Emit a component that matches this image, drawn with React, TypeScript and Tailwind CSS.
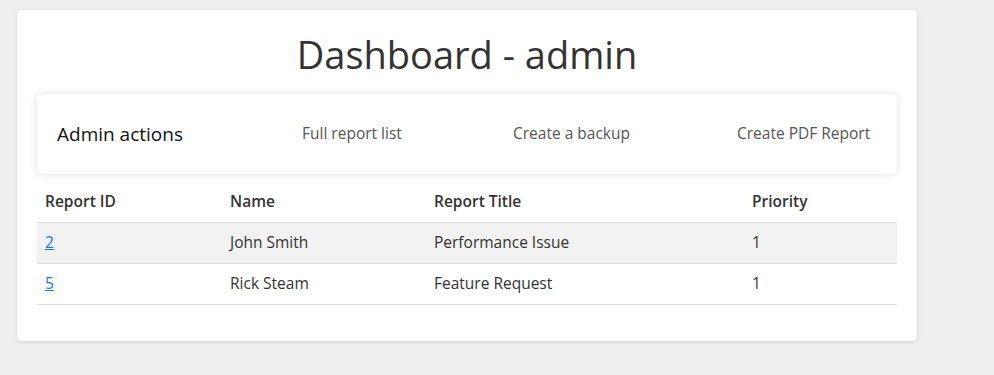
export default function App() {
  const rows = [
    { id: "2", name: "John Smith", title: "Performance Issue", priority: "1" },
    { id: "5", name: "Rick Steam", title: "Feature Request", priority: "1" },
  ];
  return (
    <div className="min-h-[375px] bg-[#efefef] pt-[10px] pl-[17px]" style={{ fontFamily: '"Open Sans", sans-serif' }}>
      <div className="w-[900px] rounded-[5px] bg-white px-[20px] pb-[36px] shadow-[0_1px_4px_rgba(0,0,0,0.12)]">
        <h1 className="pt-[22px] pb-[17px] text-center text-[38px] leading-[45px] text-[#333]">Dashboard - admin</h1>
        <div className="flex h-[80px] items-center rounded-[5px] bg-white shadow-[0_0_8px_rgba(0,0,0,0.12)]">
          <div className="w-[265px] pl-[20px] text-[19px] text-[#111]">Admin actions</div>
          <a className="w-[211px] text-[15.5px] text-[#555]">Full report list</a>
          <a className="w-[224px] text-[15.5px] text-[#555]">Create a backup</a>
          <a className="text-[15.5px] text-[#555]">Create PDF Report</a>
        </div>
        <table className="mt-[8px] w-full border-collapse text-[15.5px] text-[#333]">
          <thead>
            <tr className="h-[40px] border-b border-[#dedede]">
              <th className="w-[185px] px-[8px] text-left font-semibold">Report ID</th>
              <th className="w-[204px] px-[8px] text-left font-semibold">Name</th>
              <th className="w-[318px] px-[8px] text-left font-semibold">Report Title</th>
              <th className="px-[8px] text-left font-semibold">Priority</th>
            </tr>
          </thead>
          <tbody>
            {rows.map((r, i) => (
              <tr key={r.id} className={`h-[41px] border-b border-[#dedede] ${i === 0 ? "bg-[#f2f2f2]" : "bg-white"}`}>
                <td className="px-[8px]"><a href="#" className="text-[#1a73e8] underline">{r.id}</a></td>
                <td className="px-[8px]">{r.name}</td>
                <td className="px-[8px]">{r.title}</td>
                <td className="px-[8px]">{r.priority}</td>
              </tr>
            ))}
          </tbody>
        </table>
      </div>
    </div>
  );
}
